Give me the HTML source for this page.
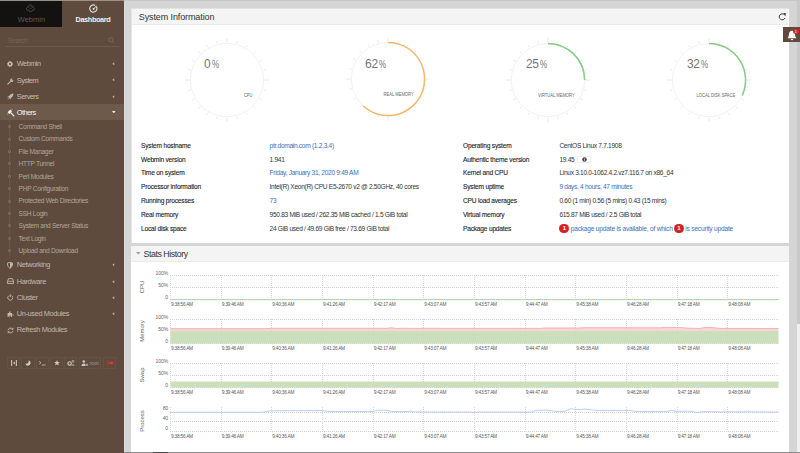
<!DOCTYPE html><html><head><meta charset="utf-8"><style>
*{margin:0;padding:0;box-sizing:border-box}
html,body{width:800px;height:453px;overflow:hidden;background:#d5d5d5;font-family:"Liberation Sans",sans-serif}
.a{position:absolute;white-space:nowrap}
.t{position:absolute;white-space:nowrap;line-height:1}
</style></head><body>

<div class="a" style="left:124px;top:0;width:676px;height:1px;background:#c9c9c9"></div>
<div class="a" style="left:124px;top:1px;width:1px;height:451px;background:#dadada"></div>
<div class="a" style="left:131px;top:8px;width:658.3px;height:235px;background:#fff;border-top:1px solid #e2e2e2;border-left:1px solid #e4e4e4"></div>
<div class="a" style="left:132px;top:9px;width:656.3px;height:15.5px;background:#f4f4f4;border-bottom:1px solid #ebebeb"></div>
<div class="a" style="left:131px;top:246px;width:658.3px;height:207px;background:#fff"></div>
<div class="a" style="left:131px;top:246px;width:658.3px;height:16px;background:#f4f4f4;border-bottom:1px solid #ebebeb"></div>
<div class="a" style="left:797px;top:0;width:3px;height:324px;background:#c9c9c9"></div>
<div class="a" style="left:797px;top:324px;width:3px;height:129px;background:#efefef"></div>
<div class="a" style="left:124px;top:452px;width:676px;height:1px;background:#8e8e8e"></div>
<div class="a" style="left:153px;top:452px;width:15px;height:1px;background:#4a4a4a"></div>
<div class="t" style="left:138.75px;top:13px;font-size:9px;color:#333;font-weight:normal;letter-spacing:-0.012em;">System Information</div>
<svg class="a" style="left:777.5px;top:13.2px" width="9" height="8" viewBox="0 0 9 8"><path d="M6.6 2.0A3.0 3.0 0 1 0 7.0 5.0" fill="none" stroke="#333" stroke-width="0.95"/><path d="M5.2 0.3L7.9 0.1L7.5 2.9Z" fill="#333"/></svg>
<div class="t" style="left:143.50px;top:250px;font-size:8.8px;color:#333;font-weight:normal;letter-spacing:-0.05em;">Stats History</div>
<svg class="a" style="left:136px;top:251.5px" width="5" height="3" viewBox="0 0 5 3"><path d="M0 0H4.5L2.25 2.5Z" fill="#999"/></svg>
<svg class="a" style="left:181.50px;top:34.60px" width="90" height="90" viewBox="-45 -45 90 90"><circle cx="0" cy="0" r="36.6" fill="none" stroke="#f2f2f2" stroke-width="1"/><line x1="0.00" y1="-37.60" x2="0.00" y2="-41.60" stroke="#e0e0e0" stroke-width="0.75"/><line x1="9.73" y1="-36.32" x2="10.38" y2="-38.73" stroke="#e0e0e0" stroke-width="0.75"/><line x1="18.80" y1="-32.56" x2="20.05" y2="-34.73" stroke="#e0e0e0" stroke-width="0.75"/><line x1="26.59" y1="-26.59" x2="28.35" y2="-28.35" stroke="#e0e0e0" stroke-width="0.75"/><line x1="32.56" y1="-18.80" x2="34.73" y2="-20.05" stroke="#e0e0e0" stroke-width="0.75"/><line x1="36.32" y1="-9.73" x2="38.73" y2="-10.38" stroke="#e0e0e0" stroke-width="0.75"/><line x1="37.60" y1="-0.00" x2="41.60" y2="-0.00" stroke="#e0e0e0" stroke-width="0.75"/><line x1="36.32" y1="9.73" x2="38.73" y2="10.38" stroke="#e0e0e0" stroke-width="0.75"/><line x1="32.56" y1="18.80" x2="34.73" y2="20.05" stroke="#e0e0e0" stroke-width="0.75"/><line x1="26.59" y1="26.59" x2="28.35" y2="28.35" stroke="#e0e0e0" stroke-width="0.75"/><line x1="18.80" y1="32.56" x2="20.05" y2="34.73" stroke="#e0e0e0" stroke-width="0.75"/><line x1="9.73" y1="36.32" x2="10.38" y2="38.73" stroke="#e0e0e0" stroke-width="0.75"/><line x1="0.00" y1="37.60" x2="0.00" y2="41.60" stroke="#e0e0e0" stroke-width="0.75"/><line x1="-9.73" y1="36.32" x2="-10.38" y2="38.73" stroke="#e0e0e0" stroke-width="0.75"/><line x1="-18.80" y1="32.56" x2="-20.05" y2="34.73" stroke="#e0e0e0" stroke-width="0.75"/><line x1="-26.59" y1="26.59" x2="-28.35" y2="28.35" stroke="#e0e0e0" stroke-width="0.75"/><line x1="-32.56" y1="18.80" x2="-34.73" y2="20.05" stroke="#e0e0e0" stroke-width="0.75"/><line x1="-36.32" y1="9.73" x2="-38.73" y2="10.38" stroke="#e0e0e0" stroke-width="0.75"/><line x1="-37.60" y1="0.00" x2="-41.60" y2="0.00" stroke="#e0e0e0" stroke-width="0.75"/><line x1="-36.32" y1="-9.73" x2="-38.73" y2="-10.38" stroke="#e0e0e0" stroke-width="0.75"/><line x1="-32.56" y1="-18.80" x2="-34.73" y2="-20.05" stroke="#e0e0e0" stroke-width="0.75"/><line x1="-26.59" y1="-26.59" x2="-28.35" y2="-28.35" stroke="#e0e0e0" stroke-width="0.75"/><line x1="-18.80" y1="-32.56" x2="-20.05" y2="-34.73" stroke="#e0e0e0" stroke-width="0.75"/><line x1="-9.73" y1="-36.32" x2="-10.38" y2="-38.73" stroke="#e0e0e0" stroke-width="0.75"/></svg>
<div class="t" style="left:204.00px;top:58px;font-size:12px;color:#777;font-weight:normal;letter-spacing:-0.02em;">0<span style="font-size:10px;margin-left:1.2px;display:inline-block;transform:scaleX(0.8);transform-origin:0 50%">%</span></div>
<div class="t" style="right:547.70px;top:93px;font-size:5.0px;color:#666;font-weight:normal;letter-spacing:0em;text-align:right;transform:scaleX(0.82);transform-origin:100% 50%">CPU</div>
<svg class="a" style="left:342.50px;top:34.40px" width="90" height="90" viewBox="-45 -45 90 90"><circle cx="0" cy="0" r="36.6" fill="none" stroke="#f2f2f2" stroke-width="1"/><line x1="0.00" y1="-37.60" x2="0.00" y2="-41.60" stroke="#e0e0e0" stroke-width="0.75"/><line x1="9.73" y1="-36.32" x2="10.38" y2="-38.73" stroke="#e0e0e0" stroke-width="0.75"/><line x1="18.80" y1="-32.56" x2="20.05" y2="-34.73" stroke="#e0e0e0" stroke-width="0.75"/><line x1="26.59" y1="-26.59" x2="28.35" y2="-28.35" stroke="#e0e0e0" stroke-width="0.75"/><line x1="32.56" y1="-18.80" x2="34.73" y2="-20.05" stroke="#e0e0e0" stroke-width="0.75"/><line x1="36.32" y1="-9.73" x2="38.73" y2="-10.38" stroke="#e0e0e0" stroke-width="0.75"/><line x1="37.60" y1="-0.00" x2="41.60" y2="-0.00" stroke="#e0e0e0" stroke-width="0.75"/><line x1="36.32" y1="9.73" x2="38.73" y2="10.38" stroke="#e0e0e0" stroke-width="0.75"/><line x1="32.56" y1="18.80" x2="34.73" y2="20.05" stroke="#e0e0e0" stroke-width="0.75"/><line x1="26.59" y1="26.59" x2="28.35" y2="28.35" stroke="#e0e0e0" stroke-width="0.75"/><line x1="18.80" y1="32.56" x2="20.05" y2="34.73" stroke="#e0e0e0" stroke-width="0.75"/><line x1="9.73" y1="36.32" x2="10.38" y2="38.73" stroke="#e0e0e0" stroke-width="0.75"/><line x1="0.00" y1="37.60" x2="0.00" y2="41.60" stroke="#e0e0e0" stroke-width="0.75"/><line x1="-9.73" y1="36.32" x2="-10.38" y2="38.73" stroke="#e0e0e0" stroke-width="0.75"/><line x1="-18.80" y1="32.56" x2="-20.05" y2="34.73" stroke="#e0e0e0" stroke-width="0.75"/><line x1="-26.59" y1="26.59" x2="-28.35" y2="28.35" stroke="#e0e0e0" stroke-width="0.75"/><line x1="-32.56" y1="18.80" x2="-34.73" y2="20.05" stroke="#e0e0e0" stroke-width="0.75"/><line x1="-36.32" y1="9.73" x2="-38.73" y2="10.38" stroke="#e0e0e0" stroke-width="0.75"/><line x1="-37.60" y1="0.00" x2="-41.60" y2="0.00" stroke="#e0e0e0" stroke-width="0.75"/><line x1="-36.32" y1="-9.73" x2="-38.73" y2="-10.38" stroke="#e0e0e0" stroke-width="0.75"/><line x1="-32.56" y1="-18.80" x2="-34.73" y2="-20.05" stroke="#e0e0e0" stroke-width="0.75"/><line x1="-26.59" y1="-26.59" x2="-28.35" y2="-28.35" stroke="#e0e0e0" stroke-width="0.75"/><line x1="-18.80" y1="-32.56" x2="-20.05" y2="-34.73" stroke="#e0e0e0" stroke-width="0.75"/><line x1="-9.73" y1="-36.32" x2="-10.38" y2="-38.73" stroke="#e0e0e0" stroke-width="0.75"/><path d="M0 -36.6 A36.6 36.6 0 1 1 -25.05 26.68" fill="none" stroke="#f4b86c" stroke-width="1.5"/></svg>
<div class="t" style="left:365.00px;top:58px;font-size:12px;color:#777;font-weight:normal;letter-spacing:-0.02em;">62<span style="font-size:10px;margin-left:1.2px;display:inline-block;transform:scaleX(0.8);transform-origin:0 50%">%</span></div>
<div class="t" style="right:386.70px;top:92px;font-size:5.0px;color:#666;font-weight:normal;letter-spacing:0em;text-align:right;transform:scaleX(0.82);transform-origin:100% 50%">REAL MEMORY</div>
<svg class="a" style="left:503.40px;top:34.60px" width="90" height="90" viewBox="-45 -45 90 90"><circle cx="0" cy="0" r="36.6" fill="none" stroke="#f2f2f2" stroke-width="1"/><line x1="0.00" y1="-37.60" x2="0.00" y2="-41.60" stroke="#e0e0e0" stroke-width="0.75"/><line x1="9.73" y1="-36.32" x2="10.38" y2="-38.73" stroke="#e0e0e0" stroke-width="0.75"/><line x1="18.80" y1="-32.56" x2="20.05" y2="-34.73" stroke="#e0e0e0" stroke-width="0.75"/><line x1="26.59" y1="-26.59" x2="28.35" y2="-28.35" stroke="#e0e0e0" stroke-width="0.75"/><line x1="32.56" y1="-18.80" x2="34.73" y2="-20.05" stroke="#e0e0e0" stroke-width="0.75"/><line x1="36.32" y1="-9.73" x2="38.73" y2="-10.38" stroke="#e0e0e0" stroke-width="0.75"/><line x1="37.60" y1="-0.00" x2="41.60" y2="-0.00" stroke="#e0e0e0" stroke-width="0.75"/><line x1="36.32" y1="9.73" x2="38.73" y2="10.38" stroke="#e0e0e0" stroke-width="0.75"/><line x1="32.56" y1="18.80" x2="34.73" y2="20.05" stroke="#e0e0e0" stroke-width="0.75"/><line x1="26.59" y1="26.59" x2="28.35" y2="28.35" stroke="#e0e0e0" stroke-width="0.75"/><line x1="18.80" y1="32.56" x2="20.05" y2="34.73" stroke="#e0e0e0" stroke-width="0.75"/><line x1="9.73" y1="36.32" x2="10.38" y2="38.73" stroke="#e0e0e0" stroke-width="0.75"/><line x1="0.00" y1="37.60" x2="0.00" y2="41.60" stroke="#e0e0e0" stroke-width="0.75"/><line x1="-9.73" y1="36.32" x2="-10.38" y2="38.73" stroke="#e0e0e0" stroke-width="0.75"/><line x1="-18.80" y1="32.56" x2="-20.05" y2="34.73" stroke="#e0e0e0" stroke-width="0.75"/><line x1="-26.59" y1="26.59" x2="-28.35" y2="28.35" stroke="#e0e0e0" stroke-width="0.75"/><line x1="-32.56" y1="18.80" x2="-34.73" y2="20.05" stroke="#e0e0e0" stroke-width="0.75"/><line x1="-36.32" y1="9.73" x2="-38.73" y2="10.38" stroke="#e0e0e0" stroke-width="0.75"/><line x1="-37.60" y1="0.00" x2="-41.60" y2="0.00" stroke="#e0e0e0" stroke-width="0.75"/><line x1="-36.32" y1="-9.73" x2="-38.73" y2="-10.38" stroke="#e0e0e0" stroke-width="0.75"/><line x1="-32.56" y1="-18.80" x2="-34.73" y2="-20.05" stroke="#e0e0e0" stroke-width="0.75"/><line x1="-26.59" y1="-26.59" x2="-28.35" y2="-28.35" stroke="#e0e0e0" stroke-width="0.75"/><line x1="-18.80" y1="-32.56" x2="-20.05" y2="-34.73" stroke="#e0e0e0" stroke-width="0.75"/><line x1="-9.73" y1="-36.32" x2="-10.38" y2="-38.73" stroke="#e0e0e0" stroke-width="0.75"/><path d="M0 -36.6 A36.6 36.6 0 0 1 36.60 -0.00" fill="none" stroke="#82cc82" stroke-width="1.5"/></svg>
<div class="t" style="left:525.90px;top:58px;font-size:12px;color:#777;font-weight:normal;letter-spacing:-0.02em;">25<span style="font-size:10px;margin-left:1.2px;display:inline-block;transform:scaleX(0.8);transform-origin:0 50%">%</span></div>
<div class="t" style="right:225.80px;top:93px;font-size:5.0px;color:#666;font-weight:normal;letter-spacing:0em;text-align:right;transform:scaleX(0.82);transform-origin:100% 50%">VIRTUAL MEMORY</div>
<svg class="a" style="left:664.40px;top:34.60px" width="90" height="90" viewBox="-45 -45 90 90"><circle cx="0" cy="0" r="36.6" fill="none" stroke="#f2f2f2" stroke-width="1"/><line x1="0.00" y1="-37.60" x2="0.00" y2="-41.60" stroke="#e0e0e0" stroke-width="0.75"/><line x1="9.73" y1="-36.32" x2="10.38" y2="-38.73" stroke="#e0e0e0" stroke-width="0.75"/><line x1="18.80" y1="-32.56" x2="20.05" y2="-34.73" stroke="#e0e0e0" stroke-width="0.75"/><line x1="26.59" y1="-26.59" x2="28.35" y2="-28.35" stroke="#e0e0e0" stroke-width="0.75"/><line x1="32.56" y1="-18.80" x2="34.73" y2="-20.05" stroke="#e0e0e0" stroke-width="0.75"/><line x1="36.32" y1="-9.73" x2="38.73" y2="-10.38" stroke="#e0e0e0" stroke-width="0.75"/><line x1="37.60" y1="-0.00" x2="41.60" y2="-0.00" stroke="#e0e0e0" stroke-width="0.75"/><line x1="36.32" y1="9.73" x2="38.73" y2="10.38" stroke="#e0e0e0" stroke-width="0.75"/><line x1="32.56" y1="18.80" x2="34.73" y2="20.05" stroke="#e0e0e0" stroke-width="0.75"/><line x1="26.59" y1="26.59" x2="28.35" y2="28.35" stroke="#e0e0e0" stroke-width="0.75"/><line x1="18.80" y1="32.56" x2="20.05" y2="34.73" stroke="#e0e0e0" stroke-width="0.75"/><line x1="9.73" y1="36.32" x2="10.38" y2="38.73" stroke="#e0e0e0" stroke-width="0.75"/><line x1="0.00" y1="37.60" x2="0.00" y2="41.60" stroke="#e0e0e0" stroke-width="0.75"/><line x1="-9.73" y1="36.32" x2="-10.38" y2="38.73" stroke="#e0e0e0" stroke-width="0.75"/><line x1="-18.80" y1="32.56" x2="-20.05" y2="34.73" stroke="#e0e0e0" stroke-width="0.75"/><line x1="-26.59" y1="26.59" x2="-28.35" y2="28.35" stroke="#e0e0e0" stroke-width="0.75"/><line x1="-32.56" y1="18.80" x2="-34.73" y2="20.05" stroke="#e0e0e0" stroke-width="0.75"/><line x1="-36.32" y1="9.73" x2="-38.73" y2="10.38" stroke="#e0e0e0" stroke-width="0.75"/><line x1="-37.60" y1="0.00" x2="-41.60" y2="0.00" stroke="#e0e0e0" stroke-width="0.75"/><line x1="-36.32" y1="-9.73" x2="-38.73" y2="-10.38" stroke="#e0e0e0" stroke-width="0.75"/><line x1="-32.56" y1="-18.80" x2="-34.73" y2="-20.05" stroke="#e0e0e0" stroke-width="0.75"/><line x1="-26.59" y1="-26.59" x2="-28.35" y2="-28.35" stroke="#e0e0e0" stroke-width="0.75"/><line x1="-18.80" y1="-32.56" x2="-20.05" y2="-34.73" stroke="#e0e0e0" stroke-width="0.75"/><line x1="-9.73" y1="-36.32" x2="-10.38" y2="-38.73" stroke="#e0e0e0" stroke-width="0.75"/><path d="M0 -36.6 A36.6 36.6 0 0 1 33.12 15.58" fill="none" stroke="#82cc82" stroke-width="1.5"/></svg>
<div class="t" style="left:686.90px;top:58px;font-size:12px;color:#777;font-weight:normal;letter-spacing:-0.02em;">32<span style="font-size:10px;margin-left:1.2px;display:inline-block;transform:scaleX(0.8);transform-origin:0 50%">%</span></div>
<div class="t" style="right:64.80px;top:93px;font-size:5.0px;color:#666;font-weight:normal;letter-spacing:0em;text-align:right;transform:scaleX(0.82);transform-origin:100% 50%">LOCAL DISK SPACE</div>
<div class="t" style="left:141.00px;top:143px;font-size:6.6px;color:#222;font-weight:normal;letter-spacing:-0.03em;-webkit-text-stroke:0.1px #222">System hostname</div>
<div class="t" style="left:269.60px;top:143px;font-size:6.6px;color:#3a6fb8;font-weight:normal;letter-spacing:-0.046em;">ptr.domain.com (1.2.3.4)</div>
<div class="t" style="left:141.00px;top:157px;font-size:6.6px;color:#222;font-weight:normal;letter-spacing:-0.03em;-webkit-text-stroke:0.1px #222">Webmin version</div>
<div class="t" style="left:269.60px;top:157px;font-size:6.6px;color:#333;font-weight:normal;letter-spacing:-0.046em;">1.941</div>
<div class="t" style="left:141.00px;top:170px;font-size:6.6px;color:#222;font-weight:normal;letter-spacing:-0.03em;-webkit-text-stroke:0.1px #222">Time on system</div>
<div class="t" style="left:269.60px;top:170px;font-size:6.6px;color:#3a6fb8;font-weight:normal;letter-spacing:-0.046em;">Friday, January 31, 2020 9:49 AM</div>
<div class="t" style="left:141.00px;top:184px;font-size:6.6px;color:#222;font-weight:normal;letter-spacing:-0.03em;-webkit-text-stroke:0.1px #222">Processor information</div>
<div class="t" style="left:269.60px;top:184px;font-size:6.6px;color:#333;font-weight:normal;letter-spacing:-0.046em;">Intel(R) Xeon(R) CPU E5-2670 v2 @ 2.50GHz, 40 cores</div>
<div class="t" style="left:141.00px;top:198px;font-size:6.6px;color:#222;font-weight:normal;letter-spacing:-0.03em;-webkit-text-stroke:0.1px #222">Running processes</div>
<div class="t" style="left:269.60px;top:198px;font-size:6.6px;color:#3a6fb8;font-weight:normal;letter-spacing:-0.046em;">73</div>
<div class="t" style="left:141.00px;top:212px;font-size:6.6px;color:#222;font-weight:normal;letter-spacing:-0.03em;-webkit-text-stroke:0.1px #222">Real memory</div>
<div class="t" style="left:269.60px;top:212px;font-size:6.6px;color:#333;font-weight:normal;letter-spacing:-0.046em;">950.83 MiB used / 262.35 MiB cached / 1.5 GiB total</div>
<div class="t" style="left:141.00px;top:226px;font-size:6.6px;color:#222;font-weight:normal;letter-spacing:-0.03em;-webkit-text-stroke:0.1px #222">Local disk space</div>
<div class="t" style="left:269.60px;top:226px;font-size:6.6px;color:#333;font-weight:normal;letter-spacing:-0.046em;">24 GiB used / 49.69 GiB free / 73.69 GiB total</div>
<div class="t" style="left:463.00px;top:143px;font-size:6.6px;color:#222;font-weight:normal;letter-spacing:-0.03em;-webkit-text-stroke:0.1px #222">Operating system</div>
<div class="t" style="left:559.40px;top:143px;font-size:6.6px;color:#333;font-weight:normal;letter-spacing:-0.046em;">CentOS Linux 7.7.1908</div>
<div class="t" style="left:463.00px;top:157px;font-size:6.6px;color:#222;font-weight:normal;letter-spacing:-0.03em;-webkit-text-stroke:0.1px #222">Authentic theme version</div>
<div class="t" style="left:559.40px;top:157px;font-size:6.6px;color:#333;font-weight:normal;letter-spacing:-0.046em;">19.45</div>
<div class="t" style="left:463.00px;top:170px;font-size:6.6px;color:#222;font-weight:normal;letter-spacing:-0.03em;-webkit-text-stroke:0.1px #222">Kernel and CPU</div>
<div class="t" style="left:559.40px;top:170px;font-size:6.6px;color:#333;font-weight:normal;letter-spacing:-0.046em;">Linux 3.10.0-1062.4.2.vz7.116.7 on x86_64</div>
<div class="t" style="left:463.00px;top:184px;font-size:6.6px;color:#222;font-weight:normal;letter-spacing:-0.03em;-webkit-text-stroke:0.1px #222">System uptime</div>
<div class="t" style="left:559.40px;top:184px;font-size:6.6px;color:#3a6fb8;font-weight:normal;letter-spacing:-0.046em;">9 days, 4 hours, 47 minutes</div>
<div class="t" style="left:463.00px;top:198px;font-size:6.6px;color:#222;font-weight:normal;letter-spacing:-0.03em;-webkit-text-stroke:0.1px #222">CPU load averages</div>
<div class="t" style="left:559.40px;top:198px;font-size:6.6px;color:#333;font-weight:normal;letter-spacing:-0.046em;">0.60 (1 min) 0.56 (5 mins) 0.43 (15 mins)</div>
<div class="t" style="left:463.00px;top:212px;font-size:6.6px;color:#222;font-weight:normal;letter-spacing:-0.03em;-webkit-text-stroke:0.1px #222">Virtual memory</div>
<div class="t" style="left:559.40px;top:212px;font-size:6.6px;color:#333;font-weight:normal;letter-spacing:-0.046em;">615.87 MiB used / 2.5 GiB total</div>
<div class="t" style="left:463.00px;top:226px;font-size:6.6px;color:#222;font-weight:normal;letter-spacing:-0.03em;-webkit-text-stroke:0.1px #222">Package updates</div>
<div class="a" style="left:577.2px;top:155.6px;width:13.4px;height:7.2px;background:#fff;border:0.8px solid #ececec;border-radius:1px"></div>
<svg class="a" style="left:581.5px;top:156.9px" width="5" height="5" viewBox="0 0 5 5"><circle cx="2.5" cy="2.5" r="2.3" fill="#4a4a4a"/><rect x="2.1" y="1.9" width="0.8" height="1.9" fill="#ccc"/><rect x="2.1" y="1.0" width="0.8" height="0.6" fill="#ccc"/></svg>
<div class="a" style="left:559.3px;top:223.60px;width:10px;height:9.6px;border-radius:5px;background:#d42323;color:#fff;font-size:6px;font-weight:bold;text-align:center;line-height:9.6px">1</div>
<div class="t" style="left:570.70px;top:226px;font-size:6.6px;color:#3a6fb8;font-weight:normal;letter-spacing:-0.03em;">package update is available, of which</div>
<div class="a" style="left:673.8px;top:223.60px;width:10px;height:9.6px;border-radius:5px;background:#d42323;color:#fff;font-size:6px;font-weight:bold;text-align:center;line-height:9.6px">1</div>
<div class="t" style="left:685.30px;top:226px;font-size:6.6px;color:#3a6fb8;font-weight:normal;letter-spacing:-0.03em;">is security update</div>
<svg class="a" style="left:0;top:0" width="800" height="453"><line x1="170" y1="275.5" x2="778.5" y2="275.5" stroke="#d0d0d0" stroke-width="1" stroke-dasharray="1 1"/><line x1="170" y1="287.5" x2="778.5" y2="287.5" stroke="#d0d0d0" stroke-width="1" stroke-dasharray="1 1"/><line x1="170" y1="299.5" x2="778.5" y2="299.5" stroke="#d0d0d0" stroke-width="1" stroke-dasharray="1 1"/><line x1="170.50" y1="275" x2="170.50" y2="299.3" stroke="#d8d8d8" stroke-width="1" stroke-dasharray="1 1"/><line x1="221.50" y1="275" x2="221.50" y2="299.3" stroke="#d8d8d8" stroke-width="1" stroke-dasharray="1 1"/><line x1="271.50" y1="275" x2="271.50" y2="299.3" stroke="#d8d8d8" stroke-width="1" stroke-dasharray="1 1"/><line x1="322.50" y1="275" x2="322.50" y2="299.3" stroke="#d8d8d8" stroke-width="1" stroke-dasharray="1 1"/><line x1="373.50" y1="275" x2="373.50" y2="299.3" stroke="#d8d8d8" stroke-width="1" stroke-dasharray="1 1"/><line x1="423.50" y1="275" x2="423.50" y2="299.3" stroke="#d8d8d8" stroke-width="1" stroke-dasharray="1 1"/><line x1="474.50" y1="275" x2="474.50" y2="299.3" stroke="#d8d8d8" stroke-width="1" stroke-dasharray="1 1"/><line x1="525.50" y1="275" x2="525.50" y2="299.3" stroke="#d8d8d8" stroke-width="1" stroke-dasharray="1 1"/><line x1="575.50" y1="275" x2="575.50" y2="299.3" stroke="#d8d8d8" stroke-width="1" stroke-dasharray="1 1"/><line x1="626.50" y1="275" x2="626.50" y2="299.3" stroke="#d8d8d8" stroke-width="1" stroke-dasharray="1 1"/><line x1="677.50" y1="275" x2="677.50" y2="299.3" stroke="#d8d8d8" stroke-width="1" stroke-dasharray="1 1"/><line x1="727.50" y1="275" x2="727.50" y2="299.3" stroke="#d8d8d8" stroke-width="1" stroke-dasharray="1 1"/><line x1="170.5" y1="299.7" x2="778.5" y2="299.7" stroke="#a6d2a0" stroke-width="0.9"/></svg>
<div class="t" style="right:632.00px;top:271px;font-size:5px;color:#666;font-weight:normal;letter-spacing:-0.02em;text-align:right;">100%</div>
<div class="t" style="right:632.00px;top:283px;font-size:5px;color:#666;font-weight:normal;letter-spacing:-0.02em;text-align:right;">50%</div>
<div class="t" style="right:632.00px;top:295px;font-size:5px;color:#666;font-weight:normal;letter-spacing:-0.02em;text-align:right;">0</div>
<div class="t" style="left:171.00px;top:303px;font-size:4.8px;color:#5a5a5a;font-weight:normal;letter-spacing:-0.05em;">9:38:56 AM</div>
<div class="t" style="left:221.67px;top:303px;font-size:4.8px;color:#5a5a5a;font-weight:normal;letter-spacing:-0.05em;">9:39:46 AM</div>
<div class="t" style="left:272.33px;top:303px;font-size:4.8px;color:#5a5a5a;font-weight:normal;letter-spacing:-0.05em;">9:40:36 AM</div>
<div class="t" style="left:323.00px;top:303px;font-size:4.8px;color:#5a5a5a;font-weight:normal;letter-spacing:-0.05em;">9:41:26 AM</div>
<div class="t" style="left:373.67px;top:303px;font-size:4.8px;color:#5a5a5a;font-weight:normal;letter-spacing:-0.05em;">9:42:17 AM</div>
<div class="t" style="left:424.33px;top:303px;font-size:4.8px;color:#5a5a5a;font-weight:normal;letter-spacing:-0.05em;">9:43:07 AM</div>
<div class="t" style="left:475.00px;top:303px;font-size:4.8px;color:#5a5a5a;font-weight:normal;letter-spacing:-0.05em;">9:43:57 AM</div>
<div class="t" style="left:525.67px;top:303px;font-size:4.8px;color:#5a5a5a;font-weight:normal;letter-spacing:-0.05em;">9:44:47 AM</div>
<div class="t" style="left:576.33px;top:303px;font-size:4.8px;color:#5a5a5a;font-weight:normal;letter-spacing:-0.05em;">9:45:38 AM</div>
<div class="t" style="left:627.00px;top:303px;font-size:4.8px;color:#5a5a5a;font-weight:normal;letter-spacing:-0.05em;">9:46:28 AM</div>
<div class="t" style="left:677.67px;top:303px;font-size:4.8px;color:#5a5a5a;font-weight:normal;letter-spacing:-0.05em;">9:47:18 AM</div>
<div class="t" style="left:728.33px;top:303px;font-size:4.8px;color:#5a5a5a;font-weight:normal;letter-spacing:-0.05em;">9:48:08 AM</div>
<div class="t" style="left:122.30000000000001px;top:284.3px;width:40px;text-align:center;font-size:6px;color:#666;transform:rotate(-90deg)">CPU</div>
<svg class="a" style="left:0;top:0" width="800" height="453"><line x1="170" y1="319.5" x2="778.5" y2="319.5" stroke="#d0d0d0" stroke-width="1" stroke-dasharray="1 1"/><line x1="170" y1="331.5" x2="778.5" y2="331.5" stroke="#d0d0d0" stroke-width="1" stroke-dasharray="1 1"/><line x1="170" y1="343.5" x2="778.5" y2="343.5" stroke="#d0d0d0" stroke-width="1" stroke-dasharray="1 1"/><line x1="170.50" y1="319" x2="170.50" y2="343.3" stroke="#d8d8d8" stroke-width="1" stroke-dasharray="1 1"/><line x1="221.50" y1="319" x2="221.50" y2="343.3" stroke="#d8d8d8" stroke-width="1" stroke-dasharray="1 1"/><line x1="271.50" y1="319" x2="271.50" y2="343.3" stroke="#d8d8d8" stroke-width="1" stroke-dasharray="1 1"/><line x1="322.50" y1="319" x2="322.50" y2="343.3" stroke="#d8d8d8" stroke-width="1" stroke-dasharray="1 1"/><line x1="373.50" y1="319" x2="373.50" y2="343.3" stroke="#d8d8d8" stroke-width="1" stroke-dasharray="1 1"/><line x1="423.50" y1="319" x2="423.50" y2="343.3" stroke="#d8d8d8" stroke-width="1" stroke-dasharray="1 1"/><line x1="474.50" y1="319" x2="474.50" y2="343.3" stroke="#d8d8d8" stroke-width="1" stroke-dasharray="1 1"/><line x1="525.50" y1="319" x2="525.50" y2="343.3" stroke="#d8d8d8" stroke-width="1" stroke-dasharray="1 1"/><line x1="575.50" y1="319" x2="575.50" y2="343.3" stroke="#d8d8d8" stroke-width="1" stroke-dasharray="1 1"/><line x1="626.50" y1="319" x2="626.50" y2="343.3" stroke="#d8d8d8" stroke-width="1" stroke-dasharray="1 1"/><line x1="677.50" y1="319" x2="677.50" y2="343.3" stroke="#d8d8d8" stroke-width="1" stroke-dasharray="1 1"/><line x1="727.50" y1="319" x2="727.50" y2="343.3" stroke="#d8d8d8" stroke-width="1" stroke-dasharray="1 1"/><polygon points="170.5,331.2 170.5,328.70 265,328.70 272,328.30 387,328.30 391,327.80 396,328.30 540,328.40 545,328.00 578,328.00 585,327.70 660,327.80 665,327.40 680,327.50 690,328.30 700,328.40 705,327.50 712,327.60 720,328.40 778.5,328.50 778.5,331.2" fill="#f5cfcf" fill-opacity="0.85"/><polyline points="170.5,328.70 265,328.70 272,328.30 387,328.30 391,327.80 396,328.30 540,328.40 545,328.00 578,328.00 585,327.70 660,327.80 665,327.40 680,327.50 690,328.30 700,328.40 705,327.50 712,327.60 720,328.40 778.5,328.50" fill="none" stroke="#f0adad" stroke-width="0.9"/><rect x="170.5" y="331.2" width="608.0" height="12.4" fill="#c8dcb6" fill-opacity="0.92"/></svg>
<div class="t" style="right:632.00px;top:315px;font-size:5px;color:#666;font-weight:normal;letter-spacing:-0.02em;text-align:right;">100%</div>
<div class="t" style="right:632.00px;top:327px;font-size:5px;color:#666;font-weight:normal;letter-spacing:-0.02em;text-align:right;">50%</div>
<div class="t" style="right:632.00px;top:339px;font-size:5px;color:#666;font-weight:normal;letter-spacing:-0.02em;text-align:right;">0</div>
<div class="t" style="left:171.00px;top:347px;font-size:4.8px;color:#5a5a5a;font-weight:normal;letter-spacing:-0.05em;">9:38:56 AM</div>
<div class="t" style="left:221.67px;top:347px;font-size:4.8px;color:#5a5a5a;font-weight:normal;letter-spacing:-0.05em;">9:39:46 AM</div>
<div class="t" style="left:272.33px;top:347px;font-size:4.8px;color:#5a5a5a;font-weight:normal;letter-spacing:-0.05em;">9:40:36 AM</div>
<div class="t" style="left:323.00px;top:347px;font-size:4.8px;color:#5a5a5a;font-weight:normal;letter-spacing:-0.05em;">9:41:26 AM</div>
<div class="t" style="left:373.67px;top:347px;font-size:4.8px;color:#5a5a5a;font-weight:normal;letter-spacing:-0.05em;">9:42:17 AM</div>
<div class="t" style="left:424.33px;top:347px;font-size:4.8px;color:#5a5a5a;font-weight:normal;letter-spacing:-0.05em;">9:43:07 AM</div>
<div class="t" style="left:475.00px;top:347px;font-size:4.8px;color:#5a5a5a;font-weight:normal;letter-spacing:-0.05em;">9:43:57 AM</div>
<div class="t" style="left:525.67px;top:347px;font-size:4.8px;color:#5a5a5a;font-weight:normal;letter-spacing:-0.05em;">9:44:47 AM</div>
<div class="t" style="left:576.33px;top:347px;font-size:4.8px;color:#5a5a5a;font-weight:normal;letter-spacing:-0.05em;">9:45:38 AM</div>
<div class="t" style="left:627.00px;top:347px;font-size:4.8px;color:#5a5a5a;font-weight:normal;letter-spacing:-0.05em;">9:46:28 AM</div>
<div class="t" style="left:677.67px;top:347px;font-size:4.8px;color:#5a5a5a;font-weight:normal;letter-spacing:-0.05em;">9:47:18 AM</div>
<div class="t" style="left:728.33px;top:347px;font-size:4.8px;color:#5a5a5a;font-weight:normal;letter-spacing:-0.05em;">9:48:08 AM</div>
<div class="t" style="left:122.30000000000001px;top:328.3px;width:40px;text-align:center;font-size:6px;color:#666;transform:rotate(-90deg)">Memory</div>
<svg class="a" style="left:0;top:0" width="800" height="453"><line x1="170" y1="363.5" x2="778.5" y2="363.5" stroke="#d0d0d0" stroke-width="1" stroke-dasharray="1 1"/><line x1="170" y1="375.5" x2="778.5" y2="375.5" stroke="#d0d0d0" stroke-width="1" stroke-dasharray="1 1"/><line x1="170" y1="387.5" x2="778.5" y2="387.5" stroke="#d0d0d0" stroke-width="1" stroke-dasharray="1 1"/><line x1="170.50" y1="363" x2="170.50" y2="387.3" stroke="#d8d8d8" stroke-width="1" stroke-dasharray="1 1"/><line x1="221.50" y1="363" x2="221.50" y2="387.3" stroke="#d8d8d8" stroke-width="1" stroke-dasharray="1 1"/><line x1="271.50" y1="363" x2="271.50" y2="387.3" stroke="#d8d8d8" stroke-width="1" stroke-dasharray="1 1"/><line x1="322.50" y1="363" x2="322.50" y2="387.3" stroke="#d8d8d8" stroke-width="1" stroke-dasharray="1 1"/><line x1="373.50" y1="363" x2="373.50" y2="387.3" stroke="#d8d8d8" stroke-width="1" stroke-dasharray="1 1"/><line x1="423.50" y1="363" x2="423.50" y2="387.3" stroke="#d8d8d8" stroke-width="1" stroke-dasharray="1 1"/><line x1="474.50" y1="363" x2="474.50" y2="387.3" stroke="#d8d8d8" stroke-width="1" stroke-dasharray="1 1"/><line x1="525.50" y1="363" x2="525.50" y2="387.3" stroke="#d8d8d8" stroke-width="1" stroke-dasharray="1 1"/><line x1="575.50" y1="363" x2="575.50" y2="387.3" stroke="#d8d8d8" stroke-width="1" stroke-dasharray="1 1"/><line x1="626.50" y1="363" x2="626.50" y2="387.3" stroke="#d8d8d8" stroke-width="1" stroke-dasharray="1 1"/><line x1="677.50" y1="363" x2="677.50" y2="387.3" stroke="#d8d8d8" stroke-width="1" stroke-dasharray="1 1"/><line x1="727.50" y1="363" x2="727.50" y2="387.3" stroke="#d8d8d8" stroke-width="1" stroke-dasharray="1 1"/><rect x="170.5" y="381.5" width="608.0" height="6.1000000000000005" fill="#c8dcb6" fill-opacity="0.92"/></svg>
<div class="t" style="right:632.00px;top:359px;font-size:5px;color:#666;font-weight:normal;letter-spacing:-0.02em;text-align:right;">100%</div>
<div class="t" style="right:632.00px;top:371px;font-size:5px;color:#666;font-weight:normal;letter-spacing:-0.02em;text-align:right;">50%</div>
<div class="t" style="right:632.00px;top:383px;font-size:5px;color:#666;font-weight:normal;letter-spacing:-0.02em;text-align:right;">0</div>
<div class="t" style="left:171.00px;top:391px;font-size:4.8px;color:#5a5a5a;font-weight:normal;letter-spacing:-0.05em;">9:38:56 AM</div>
<div class="t" style="left:221.67px;top:391px;font-size:4.8px;color:#5a5a5a;font-weight:normal;letter-spacing:-0.05em;">9:39:46 AM</div>
<div class="t" style="left:272.33px;top:391px;font-size:4.8px;color:#5a5a5a;font-weight:normal;letter-spacing:-0.05em;">9:40:36 AM</div>
<div class="t" style="left:323.00px;top:391px;font-size:4.8px;color:#5a5a5a;font-weight:normal;letter-spacing:-0.05em;">9:41:26 AM</div>
<div class="t" style="left:373.67px;top:391px;font-size:4.8px;color:#5a5a5a;font-weight:normal;letter-spacing:-0.05em;">9:42:17 AM</div>
<div class="t" style="left:424.33px;top:391px;font-size:4.8px;color:#5a5a5a;font-weight:normal;letter-spacing:-0.05em;">9:43:07 AM</div>
<div class="t" style="left:475.00px;top:391px;font-size:4.8px;color:#5a5a5a;font-weight:normal;letter-spacing:-0.05em;">9:43:57 AM</div>
<div class="t" style="left:525.67px;top:391px;font-size:4.8px;color:#5a5a5a;font-weight:normal;letter-spacing:-0.05em;">9:44:47 AM</div>
<div class="t" style="left:576.33px;top:391px;font-size:4.8px;color:#5a5a5a;font-weight:normal;letter-spacing:-0.05em;">9:45:38 AM</div>
<div class="t" style="left:627.00px;top:391px;font-size:4.8px;color:#5a5a5a;font-weight:normal;letter-spacing:-0.05em;">9:46:28 AM</div>
<div class="t" style="left:677.67px;top:391px;font-size:4.8px;color:#5a5a5a;font-weight:normal;letter-spacing:-0.05em;">9:47:18 AM</div>
<div class="t" style="left:728.33px;top:391px;font-size:4.8px;color:#5a5a5a;font-weight:normal;letter-spacing:-0.05em;">9:48:08 AM</div>
<div class="t" style="left:122.30000000000001px;top:372.3px;width:40px;text-align:center;font-size:6px;color:#666;transform:rotate(-90deg)">Swap</div>
<svg class="a" style="left:0;top:0" width="800" height="453"><line x1="170" y1="412.5" x2="778.5" y2="412.5" stroke="#d0d0d0" stroke-width="1" stroke-dasharray="1 1"/><line x1="170" y1="421.5" x2="778.5" y2="421.5" stroke="#d0d0d0" stroke-width="1" stroke-dasharray="1 1"/><line x1="170" y1="431.5" x2="778.5" y2="431.5" stroke="#d0d0d0" stroke-width="1" stroke-dasharray="1 1"/><line x1="170.50" y1="407" x2="170.50" y2="431.4" stroke="#d8d8d8" stroke-width="1" stroke-dasharray="1 1"/><line x1="221.50" y1="407" x2="221.50" y2="431.4" stroke="#d8d8d8" stroke-width="1" stroke-dasharray="1 1"/><line x1="271.50" y1="407" x2="271.50" y2="431.4" stroke="#d8d8d8" stroke-width="1" stroke-dasharray="1 1"/><line x1="322.50" y1="407" x2="322.50" y2="431.4" stroke="#d8d8d8" stroke-width="1" stroke-dasharray="1 1"/><line x1="373.50" y1="407" x2="373.50" y2="431.4" stroke="#d8d8d8" stroke-width="1" stroke-dasharray="1 1"/><line x1="423.50" y1="407" x2="423.50" y2="431.4" stroke="#d8d8d8" stroke-width="1" stroke-dasharray="1 1"/><line x1="474.50" y1="407" x2="474.50" y2="431.4" stroke="#d8d8d8" stroke-width="1" stroke-dasharray="1 1"/><line x1="525.50" y1="407" x2="525.50" y2="431.4" stroke="#d8d8d8" stroke-width="1" stroke-dasharray="1 1"/><line x1="575.50" y1="407" x2="575.50" y2="431.4" stroke="#d8d8d8" stroke-width="1" stroke-dasharray="1 1"/><line x1="626.50" y1="407" x2="626.50" y2="431.4" stroke="#d8d8d8" stroke-width="1" stroke-dasharray="1 1"/><line x1="677.50" y1="407" x2="677.50" y2="431.4" stroke="#d8d8d8" stroke-width="1" stroke-dasharray="1 1"/><line x1="727.50" y1="407" x2="727.50" y2="431.4" stroke="#d8d8d8" stroke-width="1" stroke-dasharray="1 1"/><polyline points="170.5,412.30 262,412.30 270,410.80 320,410.50 330,411.40 373,411.40 377,410.20 385,410.20 395,411.70 407,411.70 410,410.90 413,411.90 475,412.20 532,412.20 537,410.20 548,410.20 555,411.30 565,411.30 570,408.80 575,409.20 580,409.80 585,409.00 592,410.00 600,410.40 630,410.30 635,411.30 668,411.40 671,410.40 676,411.20 692,411.20 695,412.30 700,412.20 703,411.50 710,411.80 778.5,412.00" fill="none" stroke="#abc8f0" stroke-width="0.85"/></svg>
<div class="t" style="right:632.00px;top:406px;font-size:5px;color:#666;font-weight:normal;letter-spacing:-0.02em;text-align:right;">80</div>
<div class="t" style="right:632.00px;top:416px;font-size:5px;color:#666;font-weight:normal;letter-spacing:-0.02em;text-align:right;">40</div>
<div class="t" style="right:632.00px;top:426px;font-size:5px;color:#666;font-weight:normal;letter-spacing:-0.02em;text-align:right;">0</div>
<div class="t" style="left:171.00px;top:435px;font-size:4.8px;color:#5a5a5a;font-weight:normal;letter-spacing:-0.05em;">9:38:56 AM</div>
<div class="t" style="left:221.67px;top:435px;font-size:4.8px;color:#5a5a5a;font-weight:normal;letter-spacing:-0.05em;">9:39:46 AM</div>
<div class="t" style="left:272.33px;top:435px;font-size:4.8px;color:#5a5a5a;font-weight:normal;letter-spacing:-0.05em;">9:40:36 AM</div>
<div class="t" style="left:323.00px;top:435px;font-size:4.8px;color:#5a5a5a;font-weight:normal;letter-spacing:-0.05em;">9:41:26 AM</div>
<div class="t" style="left:373.67px;top:435px;font-size:4.8px;color:#5a5a5a;font-weight:normal;letter-spacing:-0.05em;">9:42:17 AM</div>
<div class="t" style="left:424.33px;top:435px;font-size:4.8px;color:#5a5a5a;font-weight:normal;letter-spacing:-0.05em;">9:43:07 AM</div>
<div class="t" style="left:475.00px;top:435px;font-size:4.8px;color:#5a5a5a;font-weight:normal;letter-spacing:-0.05em;">9:43:57 AM</div>
<div class="t" style="left:525.67px;top:435px;font-size:4.8px;color:#5a5a5a;font-weight:normal;letter-spacing:-0.05em;">9:44:47 AM</div>
<div class="t" style="left:576.33px;top:435px;font-size:4.8px;color:#5a5a5a;font-weight:normal;letter-spacing:-0.05em;">9:45:38 AM</div>
<div class="t" style="left:627.00px;top:435px;font-size:4.8px;color:#5a5a5a;font-weight:normal;letter-spacing:-0.05em;">9:46:28 AM</div>
<div class="t" style="left:677.67px;top:435px;font-size:4.8px;color:#5a5a5a;font-weight:normal;letter-spacing:-0.05em;">9:47:18 AM</div>
<div class="t" style="left:728.33px;top:435px;font-size:4.8px;color:#5a5a5a;font-weight:normal;letter-spacing:-0.05em;">9:48:08 AM</div>
<div class="t" style="left:122.30000000000001px;top:417.9px;width:40px;text-align:center;font-size:6px;color:#666;transform:rotate(-90deg)">Process</div>
<div class="a" style="left:0;top:0;width:124px;height:453px;background:#5e4b3d"></div>
<div class="a" style="left:0;top:1px;width:62px;height:25.5px;background:#131211"></div>
<div class="a" style="left:0;top:0;width:124px;height:1px;background:rgba(255,255,255,0.38)"></div>
<div class="t" style="left:17.70px;top:16px;font-size:7.5px;color:#5a5a5a;font-weight:normal;letter-spacing:-0.0em;">Webmin</div>
<div class="t" style="left:75.50px;top:16px;font-size:7.3px;color:#f0f0f0;font-weight:bold;letter-spacing:-0.05em;">Dashboard</div>
<svg class="a" style="left:26px;top:3.8px" width="9" height="8" viewBox="0 0 9 8"><path d="M2.7 2.9C2.2 0.3 6.6 0.3 6.1 2.9C8.7 2.4 9.2 6.6 6.5 6.3C5.9 8.0 2.9 8.0 2.3 6.3C-0.4 6.6 0.1 2.4 2.7 2.9Z" fill="none" stroke="#505050" stroke-width="0.95"/><path d="M3.0 3.4L4.4 5.2L5.8 3.4" fill="none" stroke="#444" stroke-width="0.6"/></svg>
<svg class="a" style="left:88.5px;top:3.5px" width="9.5" height="9.5" viewBox="0 0 9.5 9.5"><path d="M7.4 2.6A3.6 3.6 0 1 1 6.2 1.4" fill="none" stroke="#e8e4e0" stroke-width="1.1"/><path d="M4.6 4.9L7.6 1.7" stroke="#e8e4e0" stroke-width="1"/><circle cx="4.6" cy="4.9" r="0.95" fill="#f2f2f2"/></svg>
<div class="t" style="left:7.80px;top:38px;font-size:6.5px;color:#75625a;font-weight:normal;letter-spacing:-0.02em;">Search</div>
<svg class="a" style="left:108px;top:37px" width="7" height="7" viewBox="0 0 7 7"><circle cx="2.9" cy="2.9" r="2.1" fill="none" stroke="#7d6b5d" stroke-width="0.8"/><path d="M4.5 4.5L6.3 6.3" stroke="#7d6b5d" stroke-width="0.9"/></svg>
<div class="a" style="left:5px;top:46px;width:114px;height:1px;background:rgba(255,255,255,0.08)"></div>
<div class="a" style="left:0;top:104px;width:124px;height:16px;background:#6d5a4b"></div>
<div class="t" style="left:16.80px;top:60px;font-size:7.4px;color:#c3b9b0;font-weight:normal;letter-spacing:-0.075em;">Webmin</div>
<div class="t" style="left:16.80px;top:77px;font-size:7.4px;color:#c3b9b0;font-weight:normal;letter-spacing:-0.075em;">System</div>
<div class="t" style="left:16.80px;top:93px;font-size:7.4px;color:#c3b9b0;font-weight:normal;letter-spacing:-0.075em;">Servers</div>
<div class="t" style="left:16.80px;top:109px;font-size:7.4px;color:#f4f4f4;font-weight:normal;letter-spacing:-0.075em;">Others</div>
<div class="t" style="left:16.80px;top:261px;font-size:7.4px;color:#c3b9b0;font-weight:normal;letter-spacing:-0.05em;">Networking</div>
<div class="t" style="left:16.80px;top:278px;font-size:7.4px;color:#c3b9b0;font-weight:normal;letter-spacing:-0.05em;">Hardware</div>
<div class="t" style="left:16.80px;top:294px;font-size:7.4px;color:#c3b9b0;font-weight:normal;letter-spacing:-0.05em;">Cluster</div>
<div class="t" style="left:16.80px;top:310px;font-size:7.4px;color:#c3b9b0;font-weight:normal;letter-spacing:-0.05em;">Un-used Modules</div>
<div class="t" style="left:16.80px;top:326px;font-size:7.4px;color:#c3b9b0;font-weight:normal;letter-spacing:-0.05em;">Refresh Modules</div>
<svg class="a" style="left:6.8px;top:61.4px" width="6" height="6" viewBox="0 0 6 6"><circle cx="3" cy="3" r="1.75" fill="none" stroke="#c3b9b0" stroke-width="1.5"/><circle cx="3" cy="3" r="2.5" fill="none" stroke="#c3b9b0" stroke-width="0.8" stroke-dasharray="1 0.96"/></svg>
<svg class="a" style="left:6.5px;top:77.5px" width="7" height="7" viewBox="0 0 7 7"><path d="M0.8 6.2L3.6 3.4" stroke="#c3b9b0" stroke-width="1.1" stroke-linecap="round"/><path d="M3.2 3.0A1.8 1.8 0 0 1 5.6 0.7L4.6 1.9L5.2 2.5L6.3 1.5A1.8 1.8 0 0 1 4.0 3.8Z" fill="#c3b9b0"/></svg>
<svg class="a" style="left:7px;top:93px" width="7" height="7" viewBox="0 0 7 7"><path d="M6.5 0.5C4.5 0.6 3 1.6 2 3.2L1 3.3L0.4 4.2L1.7 4.3L2.7 5.3L2.8 6.6L3.7 6L3.8 5C5.4 4 6.4 2.5 6.5 0.5Z" fill="#c3b9b0"/><path d="M1.3 5.0L0.5 6.5L2 5.7Z" fill="#c3b9b0"/></svg>
<svg class="a" style="left:6.5px;top:109px" width="8" height="8" viewBox="0 0 8 8"><path d="M0.6 3.2L3.2 0.6L5.0 2.4L2.4 5.0Z" fill="#f2f2f2"/><path d="M3.9 3.9L6.9 6.9" stroke="#f2f2f2" stroke-width="1.3" stroke-linecap="round"/><path d="M0.3 5.2L1.5 4.0M4.0 1.5L5.2 0.3" stroke="#f2f2f2" stroke-width="0.6"/></svg>
<svg class="a" style="left:112px;top:62.199999999999996px" width="3" height="3.4" viewBox="0 0 3 3.4"><path d="M2.2 0.2L0.4 1.7L2.2 3.2Z" fill="#c3b9b0"/></svg>
<svg class="a" style="left:112px;top:78.4px" width="3" height="3.4" viewBox="0 0 3 3.4"><path d="M2.2 0.2L0.4 1.7L2.2 3.2Z" fill="#c3b9b0"/></svg>
<svg class="a" style="left:112px;top:94.7px" width="3" height="3.4" viewBox="0 0 3 3.4"><path d="M2.2 0.2L0.4 1.7L2.2 3.2Z" fill="#c3b9b0"/></svg>
<svg class="a" style="left:112px;top:263.2px" width="3" height="3.4" viewBox="0 0 3 3.4"><path d="M2.2 0.2L0.4 1.7L2.2 3.2Z" fill="#c3b9b0"/></svg>
<svg class="a" style="left:112px;top:279.79999999999995px" width="3" height="3.4" viewBox="0 0 3 3.4"><path d="M2.2 0.2L0.4 1.7L2.2 3.2Z" fill="#c3b9b0"/></svg>
<svg class="a" style="left:112px;top:295.59999999999997px" width="3" height="3.4" viewBox="0 0 3 3.4"><path d="M2.2 0.2L0.4 1.7L2.2 3.2Z" fill="#c3b9b0"/></svg>
<svg class="a" style="left:112px;top:312.0px" width="3" height="3.4" viewBox="0 0 3 3.4"><path d="M2.2 0.2L0.4 1.7L2.2 3.2Z" fill="#c3b9b0"/></svg>
<svg class="a" style="left:112.2px;top:110.8px" width="3.6" height="2.6" viewBox="0 0 3.6 2.6"><path d="M0 0H3.6L1.8 2.4Z" fill="#eee"/></svg>
<div class="a" style="left:9px;top:120px;width:0.6px;height:137px;background:rgba(255,255,255,0.07)"></div>
<div class="t" style="left:18.60px;top:124px;font-size:6.6px;color:#b3a699;font-weight:normal;letter-spacing:-0.045em;">Command Shell</div>
<div class="a" style="left:7.800000000000001px;top:125.1px;width:3px;height:3px;border-radius:50%;border:0.8px solid #8d7e72;background:#5e4b3d"></div>
<div class="t" style="left:18.60px;top:136px;font-size:6.6px;color:#b3a699;font-weight:normal;letter-spacing:-0.045em;">Custom Commands</div>
<div class="a" style="left:7.800000000000001px;top:137.5px;width:3px;height:3px;border-radius:50%;border:0.8px solid #8d7e72;background:#5e4b3d"></div>
<div class="t" style="left:18.60px;top:149px;font-size:6.6px;color:#b3a699;font-weight:normal;letter-spacing:-0.045em;">File Manager</div>
<div class="a" style="left:7.800000000000001px;top:149.9px;width:3px;height:3px;border-radius:50%;border:0.8px solid #8d7e72;background:#5e4b3d"></div>
<div class="t" style="left:18.60px;top:161px;font-size:6.6px;color:#b3a699;font-weight:normal;letter-spacing:-0.045em;">HTTP Tunnel</div>
<div class="a" style="left:7.800000000000001px;top:162.3px;width:3px;height:3px;border-radius:50%;border:0.8px solid #8d7e72;background:#5e4b3d"></div>
<div class="t" style="left:18.60px;top:174px;font-size:6.6px;color:#b3a699;font-weight:normal;letter-spacing:-0.045em;">Perl Modules</div>
<div class="a" style="left:7.800000000000001px;top:174.7px;width:3px;height:3px;border-radius:50%;border:0.8px solid #8d7e72;background:#5e4b3d"></div>
<div class="t" style="left:18.60px;top:186px;font-size:6.6px;color:#b3a699;font-weight:normal;letter-spacing:-0.045em;">PHP Configuration</div>
<div class="a" style="left:7.800000000000001px;top:187.1px;width:3px;height:3px;border-radius:50%;border:0.8px solid #8d7e72;background:#5e4b3d"></div>
<div class="t" style="left:18.60px;top:198px;font-size:6.6px;color:#b3a699;font-weight:normal;letter-spacing:-0.045em;">Protected Web Directories</div>
<div class="a" style="left:7.800000000000001px;top:199.5px;width:3px;height:3px;border-radius:50%;border:0.8px solid #8d7e72;background:#5e4b3d"></div>
<div class="t" style="left:18.60px;top:211px;font-size:6.6px;color:#b3a699;font-weight:normal;letter-spacing:-0.045em;">SSH Login</div>
<div class="a" style="left:7.800000000000001px;top:211.89999999999998px;width:3px;height:3px;border-radius:50%;border:0.8px solid #8d7e72;background:#5e4b3d"></div>
<div class="t" style="left:18.60px;top:223px;font-size:6.6px;color:#b3a699;font-weight:normal;letter-spacing:-0.045em;">System and Server Status</div>
<div class="a" style="left:7.800000000000001px;top:224.3px;width:3px;height:3px;border-radius:50%;border:0.8px solid #8d7e72;background:#5e4b3d"></div>
<div class="t" style="left:18.60px;top:236px;font-size:6.6px;color:#b3a699;font-weight:normal;letter-spacing:-0.045em;">Text Login</div>
<div class="a" style="left:7.800000000000001px;top:236.7px;width:3px;height:3px;border-radius:50%;border:0.8px solid #8d7e72;background:#5e4b3d"></div>
<div class="t" style="left:18.60px;top:248px;font-size:6.6px;color:#b3a699;font-weight:normal;letter-spacing:-0.045em;">Upload and Download</div>
<div class="a" style="left:7.800000000000001px;top:249.1px;width:3px;height:3px;border-radius:50%;border:0.8px solid #8d7e72;background:#5e4b3d"></div>
<svg class="a" style="left:7px;top:262px" width="6" height="6.5" viewBox="0 0 6 6.5"><path d="M3 0.3L5.6 1.1C5.6 3.8 4.6 5.5 3 6.3C1.4 5.5 0.4 3.8 0.4 1.1Z" fill="none" stroke="#c3b9b0" stroke-width="0.9"/><path d="M3 0.6V6C4.3 5.2 5.2 3.8 5.2 1.4Z" fill="#c3b9b0"/></svg>
<svg class="a" style="left:6.5px;top:278.3px" width="7" height="6" viewBox="0 0 7 6"><path d="M0.5 3.2L1.6 0.6H5.4L6.5 3.2V5.5H0.5Z" fill="none" stroke="#c3b9b0" stroke-width="0.9"/><path d="M0.6 3.3H6.4" stroke="#c3b9b0" stroke-width="0.8"/></svg>
<svg class="a" style="left:6.7px;top:294px" width="6.5" height="6.5" viewBox="0 0 6.5 6.5"><path d="M1.9 1.6A2.5 2.5 0 1 0 4.6 1.6" fill="none" stroke="#c3b9b0" stroke-width="0.9"/><path d="M3.25 0.3V3.0" stroke="#c3b9b0" stroke-width="0.9"/></svg>
<svg class="a" style="left:6.5px;top:310.5px" width="7" height="6.5" viewBox="0 0 7 6.5"><path d="M2.2 0.5H3.4V2.0H5V6H0.6V2.0H2.2Z" fill="#c3b9b0"/><path d="M5.2 4H6.8" stroke="#c3b9b0" stroke-width="0.8"/><rect x="1.6" y="4.6" width="0.9" height="1.4" fill="#5e4b3d"/><rect x="3.2" y="4.6" width="0.9" height="1.4" fill="#5e4b3d"/></svg>
<svg class="a" style="left:6.6px;top:326.5px" width="7" height="7" viewBox="0 0 7 7"><path d="M1.0 3.2A2.5 2.5 0 0 1 5.4 2.0" fill="none" stroke="#c3b9b0" stroke-width="0.9"/><path d="M6.0 3.8A2.5 2.5 0 0 1 1.6 5.0" fill="none" stroke="#c3b9b0" stroke-width="0.9"/><path d="M6.3 0.6V2.8H4.1Z" fill="#c3b9b0"/><path d="M0.7 6.4V4.2H2.9Z" fill="#c3b9b0"/></svg>
<div class="a" style="left:6.9px;top:357.25px;width:12.700000000000001px;height:11.25px;border:0.7px solid rgba(255,255,255,0.04)"></div>
<div class="a" style="left:20.75px;top:357.25px;width:13.850000000000001px;height:11.25px;border:0.7px solid rgba(255,255,255,0.04)"></div>
<div class="a" style="left:35.75px;top:357.25px;width:13.149999999999999px;height:11.25px;border:0.7px solid rgba(255,255,255,0.04)"></div>
<div class="a" style="left:50px;top:357.25px;width:12.75px;height:11.25px;border:0.7px solid rgba(255,255,255,0.04)"></div>
<div class="a" style="left:63.9px;top:357.25px;width:13.500000000000007px;height:11.25px;border:0.7px solid rgba(255,255,255,0.04)"></div>
<div class="a" style="left:78.5px;top:357.25px;width:22.5px;height:11.25px;border:0.7px solid rgba(255,255,255,0.04)"></div>
<div class="a" style="left:102.9px;top:357.25px;width:13.099999999999994px;height:11.25px;border:0.7px solid rgba(255,255,255,0.04)"></div>
<div class="t" style="left:89.40px;top:361px;font-size:5.2px;color:#a29890;font-weight:normal;letter-spacing:0.02em;">root</div>
<svg class="a" style="left:10.5px;top:359.8px" width="6" height="6.2" viewBox="0 0 6 6.2"><rect x="0.1" y="0" width="1.1" height="6.2" fill="#cfc8c2"/><rect x="4.8" y="0" width="1.1" height="6.2" fill="#cfc8c2"/><path d="M2.0 3.1L3.8 1.6V4.6Z" fill="#cfc8c2"/></svg>
<svg class="a" style="left:25.4px;top:359.6px" width="6" height="6" viewBox="0 0 6 6"><path d="M3.4 0.3A2.7 2.7 0 1 1 0.3 3.4A2.3 2.3 0 0 0 3.4 0.3Z" fill="#cfc8c2"/></svg>
<svg class="a" style="left:39px;top:361px" width="7" height="4.5" viewBox="0 0 7 4.5"><path d="M0.3 0.3L1.9 1.7L0.3 3.1" fill="none" stroke="#cfc8c2" stroke-width="0.8"/><path d="M2.8 4H6.5" stroke="#cfc8c2" stroke-width="0.8"/></svg>
<svg class="a" style="left:53.6px;top:360px" width="6" height="5.5" viewBox="0 0 6 5.5"><path d="M3 0.1L3.8 1.9L5.9 2.0L4.3 3.3L4.8 5.4L3 4.3L1.2 5.4L1.7 3.3L0.1 2.0L2.2 1.9Z" fill="#cfc8c2"/></svg>
<svg class="a" style="left:67.4px;top:359.6px" width="7.5" height="6.8" viewBox="0 0 7.5 6.8"><circle cx="2.6" cy="3.4" r="1.7" fill="none" stroke="#cfc8c2" stroke-width="1.1"/><circle cx="6" cy="1.3" r="1" fill="none" stroke="#cfc8c2" stroke-width="0.7"/><circle cx="6" cy="5.5" r="1" fill="none" stroke="#cfc8c2" stroke-width="0.7"/></svg>
<svg class="a" style="left:80.8px;top:359.8px" width="7.5" height="6.5" viewBox="0 0 7.5 6.5"><circle cx="2.8" cy="1.5" r="1.3" fill="#cfc8c2"/><path d="M0.4 6.2C0.4 4.4 1.4 3.4 2.8 3.4C3.6 3.4 4.1 3.6 4.4 3.9V6.2Z" fill="#cfc8c2"/><circle cx="6" cy="5" r="1" fill="none" stroke="#cfc8c2" stroke-width="0.7"/></svg>
<svg class="a" style="left:106.5px;top:359.6px" width="7" height="6" viewBox="0 0 7 6"><path d="M0.3 0.4H2.0V1.1H1.0V4.9H2.0V5.6H0.3Z" fill="#d92b2b"/><path d="M6.8 3.0L4.3 0.6V1.9H1.8V4.1H4.3V5.4Z" fill="#e53030"/></svg>
<div class="a" style="left:783px;top:27.4px;width:17px;height:15px;background:#5e4b3d"></div>
<svg class="a" style="left:786.8px;top:29.6px" width="10.5" height="11" viewBox="0 0 10.5 11"><path d="M5 0.8C2.8 0.8 2.0 2.6 2.0 4.6C2.0 6.6 1.0 7.4 0.6 8.2H9.4C9.0 7.4 8.0 6.6 8.0 4.6C8.0 2.6 7.2 0.8 5 0.8Z" fill="#fff"/><path d="M3.8 9.0A1.2 1.2 0 0 0 6.2 9.0Z" fill="#fff"/></svg>
<div class="a" style="left:793.2px;top:28.6px;width:5.6px;height:5.6px;border-radius:50%;background:#e02424;color:#fff;font-size:4px;line-height:5.6px;text-align:center">1</div>
</body></html>
